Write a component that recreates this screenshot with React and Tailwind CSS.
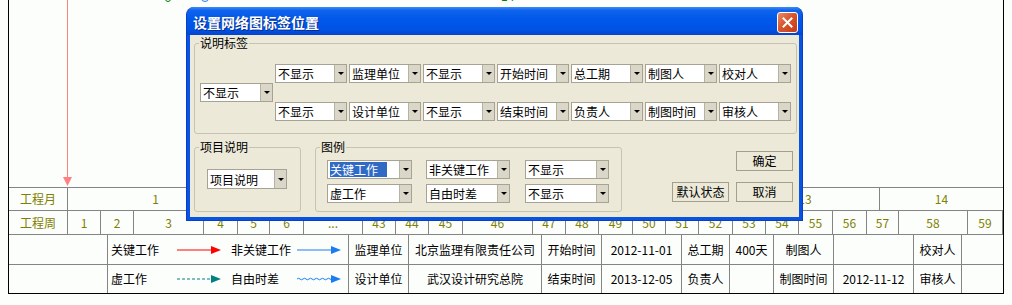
import React from "react";

const OLIVE = "text-[#808000]";

function Tri() {
  return <div className="w-0 h-0 border-l-[3px] border-r-[3px] border-t-[3px] border-l-transparent border-r-transparent border-t-black" />;
}

function Combo({ text, w, h = "h-[19px]", selected = false }) {
  return (
    <div className={`flex ${w} ${h} border border-[#a7a394] bg-white shrink-0`}>
      <div className="flex-1 flex items-center pl-[2px] overflow-hidden whitespace-nowrap">
        {selected ? (
          <span className="bg-[#316ac5] text-white h-[15px] leading-[15px] pr-[9px]">{text}</span>
        ) : (
          <span className="leading-[15px]">{text}</span>
        )}
      </div>
      <div className="w-[12px] bg-[#dad6c8] border-l border-[#b7b3a3] flex items-center justify-center">
        <Tri />
      </div>
    </div>
  );
}

function Group({ label, className, children }) {
  return (
    <div className={`relative border border-[#c6c3b3] rounded-[3px] shrink-0 ${className}`}>
      <div className="absolute left-[4px] top-[-9px] bg-[#ece9d8] px-[1px] leading-[16px]">{label}</div>
      {children}
    </div>
  );
}

function Btn({ children }) {
  return (
    <div className="w-[57px] h-[20px] border border-[#a39f8e] bg-[#ece9d8] flex items-center justify-center leading-none">
      {children}
    </div>
  );
}

function Arrow({ color, kind }) {
  let line;
  if (kind === "dash") {
    line = <line x1="0" y1="5" x2="35" y2="5" stroke={color} strokeWidth="1" strokeDasharray="3 2" />;
  } else if (kind === "wave") {
    line = (
      <path
        d="M0 5 q1.5 -1.5 3 0 t3 0 t3 0 t3 0 t3 0 t3 0 t3 0 t3 0 t3 0 t3 0 t3 0 t3 0"
        fill="none"
        stroke={color}
        strokeWidth="1"
      />
    );
  } else {
    line = <line x1="0" y1="5" x2="35" y2="5" stroke={color} strokeWidth="1" />;
  }
  return (
    <svg width="45" height="10" viewBox="0 0 45 10" className="block">
      {line}
      <polygon points="34,1 44,5 34,9" fill={color} />
    </svg>
  );
}

const weeks = [
  ["1", "w-[33px]"],
  ["2", "w-[33px]"],
  ["3", "w-[70px]"],
  ["4", "w-[34px]"],
  ["5", "w-[32px]"],
  ["6", "w-[34px]"],
  ["...", "w-[59px]"],
  ["43", "w-[33px]"],
  ["44", "w-[33px]"],
  ["45", "w-[34px]"],
  ["46", "w-[70px]"],
  ["47", "w-[33px]"],
  ["48", "w-[33px]"],
  ["49", "w-[34px]"],
  ["50", "w-[33px]"],
  ["51", "w-[33px]"],
  ["52", "w-[34px]"],
  ["53", "w-[33px]"],
  ["54", "w-[33px]"],
  ["55", "w-[34px]"],
  ["56", "w-[34px]"],
  ["57", "w-[32px]"],
  ["58", "w-[69px]"],
  ["59", "w-[36px] border-r"],
];

const months = [
  ["1", "w-[176px]"],
  ["", "w-[487px]"],
  ["13", "w-[149px]"],
  ["14", "w-[124px]"],
];

const infoCols = ["w-[60px]", "w-[133px]", "w-[60px]", "w-[80px]", "w-[48px]", "w-[44px]", "w-[60px]", "w-[80px]", "w-[48px]", "w-[42px]"];
const infoRows = [
  ["监理单位", "北京监理有限责任公司", "开始时间", "2012-11-01", "总工期", "400天", "制图人", "", "校对人", ""],
  ["设计单位", "武汉设计研究总院", "结束时间", "2013-12-05", "负责人", "", "制图时间", "2012-11-12", "审核人", ""],
];

const legendRows = [
  { a: "关键工作", ac: "#ff0000", ak: "line", b: "非关键工作", bc: "#1a7cf0", bk: "line" },
  { a: "虚工作", ac: "#008080", ak: "dash", b: "自由时差", bc: "#1a7cf0", bk: "wave" },
];

export default function App() {
  const row1 = ["不显示", "监理单位", "不显示", "开始时间", "总工期", "制图人", "校对人"];
  const row2 = ["不显示", "设计单位", "不显示", "结束时间", "负责人", "制图时间", "审核人"];
  return (
    <div className="relative w-[1012px] h-[305px] overflow-hidden bg-[#fcfefc] text-[12px] text-black font-['Noto_Sans_CJK_SC',sans-serif]">
      {/* Chart frame */}
      <div className="ml-[8px] w-[996px] flex flex-col border-l border-r border-b border-black">
        <div className="relative h-[187px]">
          <div className="absolute left-[156px] top-[-4px] w-[6px] h-[6px] rounded-full border border-[#008000]" />
          <div className="absolute left-[192px] top-[-6px] w-[8px] h-[8px] rounded-full border border-[#1a7cf0]" />
          <div className="absolute left-[492px] top-[-11px] text-[#008000] leading-[14px]">14</div>
          <div className="absolute left-[58px] top-0 w-[1px] h-[178px] bg-[#ff8080]" />
          <svg className="absolute left-[54px] top-[177px]" width="9" height="10" viewBox="0 0 9 10">
            <polygon points="0,0 9,0 4.5,9" fill="#ff8080" />
          </svg>
        </div>
        {/* Month row */}
        <div className={`flex h-[23px] border-t border-[#848484] ${OLIVE}`}>
          <div className="w-[58px] flex items-center justify-center">工程月</div>
          {months.map(([t, w], i) => (
            <div key={i} className={`${w} border-l border-[#848484] flex items-center justify-center`}>
              {t}
            </div>
          ))}
        </div>
        {/* Week row */}
        <div className={`flex h-[24px] border-t border-[#848484] ${OLIVE}`}>
          <div className="w-[58px] flex items-center justify-center">工程周</div>
          {weeks.map(([t, w], i) => (
            <div key={i} className={`${w} border-l border-[#848484] flex items-center justify-center`}>
              {t}
            </div>
          ))}
        </div>
        {/* Legend / info rows */}
        {legendRows.map((r, ri) => (
          <div key={ri} className={`flex border-t border-[#848484] ${ri === 0 ? "h-[30px]" : "h-[29px]"}`}>
            <div className="w-[98px]" />
            <div className="w-[241px] border-l border-[#848484] pl-[3px] grid grid-cols-[66px_54px_66px_45px] items-center">
              <div>{r.a}</div>
              <Arrow color={r.ac} kind={r.ak} />
              <div>{r.b}</div>
              <Arrow color={r.bc} kind={r.bk} />
            </div>
            {infoRows[ri].map((t, ci) => (
              <div key={ci} className={`${infoCols[ci]} border-l border-[#848484] flex items-center justify-center whitespace-nowrap`}>
                {t}
              </div>
            ))}
          </div>
        ))}
      </div>

      {/* Dialog */}
      <div className="absolute left-[186px] top-[7px] w-[617px] h-[214px] flex flex-col rounded-t-[8px] bg-[#0853e0] border border-[#0a3ec8] border-t-0 overflow-hidden">
        <div className="relative h-[28px] shrink-0 flex items-center pl-[6px] pt-[1px] bg-[linear-gradient(to_bottom,#3b8df7_0%,#0f63ec_12%,#0058ea_45%,#0053e4_80%,#0444cf_100%)]">
          <span className="text-white font-bold text-[14px] leading-none [text-shadow:1px_1px_0_#0a2a8a]">设置网络图标签位置</span>
          <div className="absolute right-[4px] top-[5px] w-[21px] h-[21px] rounded-[3px] border border-white bg-[linear-gradient(135deg,#e98b6a_0%,#d9552d_45%,#c23d17_100%)] flex items-center justify-center">
            <svg width="11" height="11" viewBox="0 0 11 11">
              <path d="M1.5 1.5 L9.5 9.5 M9.5 1.5 L1.5 9.5" stroke="white" strokeWidth="2" strokeLinecap="square" />
            </svg>
          </div>
        </div>
        <div className="flex-1 mx-[3px] mb-[3px] bg-[#ece9d8] flex flex-col">
          <Group label="说明标签" className="ml-[4px] mt-[8px] w-[603px] h-[91px]">
            <div className="flex items-start pt-[20px] pl-[5px]">
              <div className="mt-[19px]">
                <Combo text="不显示" w="w-[73px]" />
              </div>
              <div className="ml-[2px] flex flex-col gap-[19px]">
                <div className="flex gap-[2px]">
                  {row1.map((t, i) => (
                    <Combo key={i} text={t} w="w-[72px]" />
                  ))}
                </div>
                <div className="flex gap-[2px]">
                  {row2.map((t, i) => (
                    <Combo key={i} text={t} w="w-[72px]" />
                  ))}
                </div>
              </div>
            </div>
          </Group>
          <div className="flex mt-[13px]">
            <Group label="项目说明" className="ml-[4px] w-[107px] h-[65px]">
              <div className="pl-[12px] pt-[21px]">
                <Combo text="项目说明" w="w-[80px]" h="h-[20px]" />
              </div>
            </Group>
            <Group label="图例" className="ml-[14px] w-[307px] h-[65px]">
              <div className="pl-[11px] pt-[12px] flex flex-col gap-[5px]">
                <div className="flex">
                  <Combo text="关键工作" w="w-[85px]" selected />
                  <div className="ml-[14px]"><Combo text="非关键工作" w="w-[84px]" /></div>
                  <div className="ml-[15px]"><Combo text="不显示" w="w-[84px]" /></div>
                </div>
                <div className="flex">
                  <Combo text="虚工作" w="w-[85px]" />
                  <div className="ml-[14px]"><Combo text="自由时差" w="w-[84px]" /></div>
                  <div className="ml-[15px]"><Combo text="不显示" w="w-[84px]" /></div>
                </div>
              </div>
            </Group>
            <div className="ml-auto mr-[6px] flex flex-col items-end">
              <div className="mt-[4px]">
                <Btn>确定</Btn>
              </div>
              <div className="mt-[11px] flex gap-[7px]">
                <Btn>默认状态</Btn>
                <Btn>取消</Btn>
              </div>
            </div>
          </div>
        </div>
      </div>
    </div>
  );
}
